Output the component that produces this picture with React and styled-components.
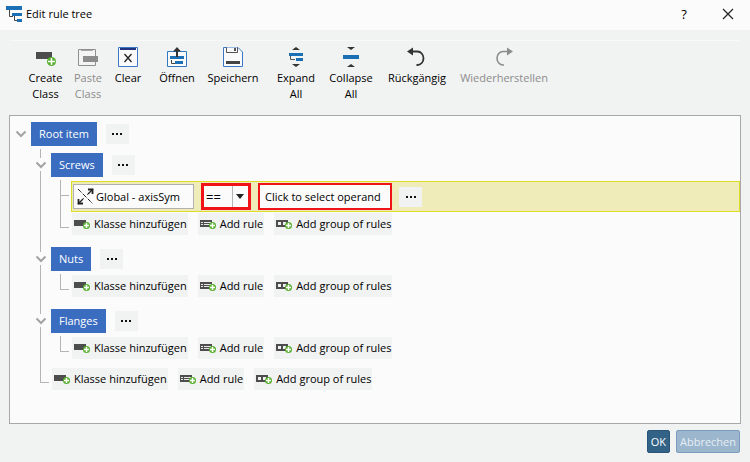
import React from 'react';
import styled, { createGlobalStyle, css } from 'styled-components';

const App = () => {
    return (
        <Dialog>
            <GlobalStyle />
            <TitleBar>
                <TreeIcon />
                <Title>Edit rule tree</Title>
                <TitleButton type="button" aria-label="Help">?</TitleButton>
                <TitleButton type="button" aria-label="Close">
                    <svg width="12" height="12" viewBox="0 0 12 12" fill="none" stroke="#222" strokeWidth="1.2">
                        <path d="M1 1l10 10M11 1L1 11" />
                    </svg>
                </TitleButton>
            </TitleBar>

            <Toolbar>
                <ToolGroup>
                    <Tool $width={43} icon={<CreateIcon />}>Create<br />Class</Tool>
                    <Tool $width={42} icon={<PasteIcon />} disabled>Paste<br />Class</Tool>
                    <Tool $width={38} icon={<ClearIcon />}>Clear</Tool>
                </ToolGroup>
                <ToolGroup>
                    <Tool $width={48} icon={<OpenIcon />}>Öffnen</Tool>
                    <Tool $width={64} icon={<SaveIcon />}>Speichern</Tool>
                </ToolGroup>
                <ToolGroup>
                    <Tool $width={50} icon={<ExpandIcon />}>Expand<br />All</Tool>
                    <Tool $width={60} icon={<CollapseIcon />}>Collapse<br />All</Tool>
                    <Tool $width={72} icon={<UndoIcon />}>Rückgängig</Tool>
                    <Tool $width={102} icon={<RedoIcon />} disabled>Wiederherstellen</Tool>
                </ToolGroup>
            </Toolbar>

            <TreePanel>
                <TreeList role="tree">
                    <Node label="Root item" root>
                        <Node label="Screws">
                            <Leaf>
                                <Rule />
                            </Leaf>
                            <Leaf last>
                                <Actions />
                            </Leaf>
                        </Node>
                        <Node label="Nuts">
                            <Leaf last>
                                <Actions />
                            </Leaf>
                        </Node>
                        <Node label="Flanges">
                            <Leaf last>
                                <Actions />
                            </Leaf>
                        </Node>
                        <Leaf last>
                            <Actions />
                        </Leaf>
                    </Node>
                </TreeList>
            </TreePanel>

            <Footer>
                <FooterButton type="button">OK</FooterButton>
                <FooterButton type="button" disabled>Abbrechen</FooterButton>
            </Footer>
        </Dialog>
    );
}

const Tool = ({ icon, children, ...rest }) => (
    <ToolButton type="button" {...rest}>
        {icon}
        <span>{children}</span>
    </ToolButton>
);

const Node = ({ label, root, children }) => (
    <TreeItem>
        <Gutter>
            <GutterTop $line={!root} />
            <Toggle type="button" aria-label={`Toggle ${label}`}>
                <svg width="12" height="8" viewBox="0 0 12 8" fill="none" stroke="#a3a3a3" strokeWidth="2">
                    <path d="M1.5 1.5L6 6l4.5-4.5" />
                </svg>
            </Toggle>
            {!root && <GutterLine />}
        </Gutter>
        <NodeBody>
            <NodeHeader>
                <NodeTag type="button">{label}</NodeTag>
                <MoreButton />
            </NodeHeader>
            <TreeList role="group">{children}</TreeList>
        </NodeBody>
    </TreeItem>
);

const Leaf = ({ last, children }) => (
    <TreeItem>
        <Gutter>
            <Elbow />
            {!last && <GutterLine />}
        </Gutter>
        {children}
    </TreeItem>
);

const Rule = () => (
    <RuleRow>
        <Attribute type="button">
            <AxisIcon />
            Global - axisSym
        </Attribute>
        <Operator>
            <select aria-label="Operator" defaultValue="==">
                <option>==</option>
                <option>!=</option>
            </select>
            <svg width="16" height="21" viewBox="0 0 16 21">
                <path d="M.5 0v21" stroke="#b5b5b5" />
                <path d="M4 8h8l-4 5z" fill="#222" />
            </svg>
        </Operator>
        <Operand type="button">Click to select operand</Operand>
        <MoreButton />
    </RuleRow>
);

const Actions = () => (
    <ActionRow>
        <ActionButton type="button"><AddClassIcon />Klasse hinzufügen</ActionButton>
        <ActionButton type="button"><AddRuleIcon />Add rule</ActionButton>
        <ActionButton type="button"><AddGroupIcon />Add group of rules</ActionButton>
    </ActionRow>
);

const MoreButton = () => (
    <More type="button" aria-label="More">
        <svg width="12" height="2" viewBox="0 0 12 2" fill="#111">
            <path d="M1 0h2v2H1zM5 0h2v2H5zM9 0h2v2H9z" />
        </svg>
    </More>
);

/* Icons */

const TreeIcon = () => (
    <svg width="17" height="17" viewBox="0 0 17 17">
        <path d="M3.5 4v6.5H7M8.500 10v4.500H12" fill="none" stroke="#444" />
        <path d="M0 0h16v4H0zM6 7h10v3H6zM11 13h5v3h-5z" fill="#1a6fb5" />
    </svg>
);

const Plus = ({ x, y, r }) => (
    <g>
        <circle cx={x} cy={y} r={r} fill="#58b030" />
        <path
            d={`M${x - r + 1} ${y}h${2 * r - 2}M${x} ${y - r + 1}v${2 * r - 2}`}
            stroke="#fff"
            strokeWidth="1.5"
        />
    </g>
);

const CreateIcon = () => (
    <svg width="20" height="20" viewBox="0 0 20 20">
        <path d="M0 5h16v7H0z" fill="#4d4d4d" />
        <Plus x={15.5} y={14.5} r={4.5} />
    </svg>
);

const PasteIcon = () => (
    <svg width="20" height="20" viewBox="0 0 20 20">
        <path d="M.5 2.5h17v16H.5z" fill="#f4f4f4" stroke="#8f8f8f" />
        <path d="M3 3.5h12" stroke="#a8a8a8" />
        <path d="M5 9h15v6H5z" fill="#8c8c8c" />
    </svg>
);

const ClearIcon = () => (
    <svg width="20" height="20" viewBox="0 0 20 20">
        <path d="M.5.5h19v19H.5z" fill="#fafafa" stroke="#3c78c8" />
        <path d="M2 1h16v2H2z" fill="#22357e" />
        <path d="M6.5 7l7 8M13.5 7l-7 8" stroke="#222" strokeWidth="1.3" />
    </svg>
);

const OpenIcon = () => (
    <svg width="20" height="20" viewBox="0 0 20 20">
        <path d="M.5 4.5h19v15H.5z" fill="#fafafa" stroke="#2f7ac0" />
        <path d="M4.5 13v3.5H8" fill="none" stroke="#444" />
        <path d="M3 9h14v3H3zM8 14h8v3H8z" fill="#1a6fb5" />
        <path d="M10 10V3" stroke="#333" strokeWidth="2" />
        <path d="M6 4.5L10 0l4 4.5z" fill="#333" />
    </svg>
);

const SaveIcon = () => (
    <svg width="20" height="20" viewBox="0 0 20 20">
        <path d="M.5.5H15L19.5 5v14.5H.5z" fill="#fafafa" stroke="#3c78c8" />
        <path d="M3.5.5v5h11v-5" fill="#fafafa" stroke="#555" />
        <path d="M11 1h2v3h-2z" fill="#555" />
        <path d="M3 14h14v3H3z" fill="#444" />
    </svg>
);

const ExpandIcon = () => (
    <svg width="20" height="20" viewBox="0 0 20 20">
        <path d="M6 3l4-3 4 3zM6 17h8l-4 3z" fill="#333" />
        <path d="M4.5 8v4.500H9" fill="none" stroke="#555" />
        <path d="M3 6h14v3H3zM10 11h7v3h-7z" fill="#1a6fb5" />
    </svg>
);

const CollapseIcon = () => (
    <svg width="20" height="20" viewBox="0 0 20 20">
        <path d="M6 0h8l-4 3zM6 20l4-3 4 3z" fill="#333" />
        <path d="M2 8h16v4H2z" fill="#1a6fb5" />
    </svg>
);

const UndoIcon = () => (
    <svg width="20" height="20" viewBox="0 0 20 20">
        <path d="M5 4.5h5.500a6 6.750 0 0 1 0 13.500H9.500" fill="none" stroke="#333" strokeWidth="1.8" />
        <path d="M0 4.500L6 .5v8z" fill="#333" />
    </svg>
);

const RedoIcon = () => (
    <svg width="20" height="20" viewBox="0 0 20 20">
        <path d="M14 4.500H9a6 6.750 0 0 0 0 13.500h1" fill="none" stroke="#8c8c8c" strokeWidth="1.6" />
        <path d="M19 4.500L13 .5v8z" fill="#8c8c8c" />
    </svg>
);

const AxisIcon = () => (
    <svg width="17" height="17" viewBox="0 0 17 17" fill="none" stroke="#222">
        <path d="M1 16l5-5M11 6l5-5" strokeWidth="1.400" />
        <path d="M6 11l5-5" strokeDasharray="1 2" />
        <path d="M1 1l15 15" strokeDasharray="4 1 1 1" />
        <path d="M11 1.500h4.500V6M1.500 11v4.500H6" strokeWidth="1.800" />
    </svg>
);

const AddClassIcon = () => (
    <svg width="17" height="12" viewBox="0 0 17 12">
        <path d="M0 2h12v6H0z" fill="#4d4d4d" />
        <Plus x={12.5} y={7.5} r={3.5} />
    </svg>
);

const AddRuleIcon = () => (
    <svg width="17" height="12" viewBox="0 0 17 12">
        <path d="M0 2h12v7H0z" fill="#4d4d4d" />
        <path d="M1 4.500h2M4 4.500h7M1 6.500h2M4 6.500h7" stroke="#e8e8e8" />
        <Plus x={12.5} y={7.5} r={3.5} />
    </svg>
);

const AddGroupIcon = () => (
    <svg width="17" height="12" viewBox="0 0 17 12">
        <path d="M0 2h12v7H0z" fill="#4d4d4d" />
        <path d="M2 4h3v3H2zM7 4h3v3H7z" fill="#f0f0f0" />
        <Plus x={12.5} y={7.5} r={3.5} />
    </svg>
);

/* Styles */

const GlobalStyle = createGlobalStyle`
    * {
        box-sizing: border-box;
    }

    body {
        margin: 0;
        background: #f1f2f2;
    }

    body, button, select {
        font-family: "Open Sans", "Noto Sans", sans-serif;
        font-size: 11px;
        line-height: 16px;
        color: #000;
    }

    button {
        padding: 0;
        border: none;
        background: none;
        white-space: nowrap;
    }

    svg {
        flex: none;
    }
`;

const Dialog = styled.div`
    display: flex;
    flex-direction: column;
    min-height: 100vh;
`;

const TitleBar = styled.header`
    display: flex;
    align-items: center;
    height: 30px;
    padding: 0 0 2px 6px;
    background: #fbfbfb;
`;

const Title = styled.h1`
    flex: 1;
    margin: 0 0 0 3px;
    font-size: 11px;
    font-weight: 400;
`;

const TitleButton = styled.button`
    display: flex;
    align-items: center;
    justify-content: center;
    width: 44px;
    height: 28px;
    font-size: 13px;
`;

const Toolbar = styled.div`
    display: flex;
    gap: 6px;
    margin: 10px 10px 0;
    padding: 6px 14px 0;
    border-top: 1px solid #f8f8f8;
`;

const ToolGroup = styled.div`
    display: flex;
    align-items: flex-start;
`;

const ToolButton = styled.button`
    display: flex;
    flex-direction: column;
    align-items: center;
    gap: 3px;
    width: ${props => props.$width}px;

    &:disabled {
        color: #8c8c8c;
    }
`;

const TreePanel = styled.main`
    flex: 1;
    margin: 13px 9px 0;
    padding: 2px 0 0 1px;
    border: 1px solid #a8a8a8;
    background: #fbfbfb;
`;

const TreeList = styled.ul`
    margin: 0;
    padding: 0;
    list-style: none;
`;

const TreeItem = styled.li.attrs({ role: 'treeitem' })`
    display: flex;
`;

const Gutter = styled.div`
    flex: none;
    display: flex;
    flex-direction: column;
    width: 20px;
`;

const line = css`
    margin-left: 9px;
    border-left: 1px solid #b4b4b4;
`;

const GutterTop = styled.div`
    height: 9px;
    ${props => props.$line && line}
`;

const GutterLine = styled.div`
    flex: 1;
    ${line}
`;

const Toggle = styled.button`
    display: flex;
    align-items: center;
    justify-content: center;
    height: 13px;
`;

const Elbow = styled.div`
    height: 16px;
    border-bottom: 1px solid #b4b4b4;
    ${line}
    margin-right: 2px;
`;

const NodeBody = styled.div`
    flex: 1;
    min-width: 0;
`;

const NodeHeader = styled.div`
    display: flex;
    align-items: center;
    gap: 9px;
    height: 31px;
    padding-top: 1px;
`;

const NodeTag = styled.button`
    height: 24px;
    padding: 0 8px;
    background: #3a6cc0;
    color: #fff;
`;

const More = styled.button`
    display: flex;
    align-items: center;
    justify-content: center;
    width: 23px;
    height: 20px;
    background: #f1f2f2;
`;

const RuleRow = styled.div`
    flex: 1;
    display: flex;
    align-items: center;
    gap: 7px;
    height: 31px;
    margin-top: 1px;
    padding-left: 1px;
    border: 1px solid #dfdc28;
    background: #efecba;
`;

const Attribute = styled.button`
    display: flex;
    align-items: center;
    gap: 2px;
    width: 121px;
    height: 25px;
    padding-left: 3px;
    border: 1px solid #b0b0b0;
    background: #fbfbfb;
`;

const Operator = styled.label`
    display: grid;
    align-items: center;
    width: 50px;
    height: 27px;
    border: 3px solid #f01418;
    background: #fbfbfb;

    select, svg {
        grid-area: 1 / 1;
    }

    select {
        height: 20px;
        padding: 0 0 0 2px;
        border: none;
        background: none;
        font-size: 13px;
        appearance: none;
    }

    svg {
        justify-self: end;
        pointer-events: none;
    }
`;

const Operand = styled.button`
    width: 134px;
    height: 27px;
    padding-left: 5px;
    border: 2px solid #f01418;
    background: #fbfbfb;
    text-align: left;
`;

const ActionRow = styled.div`
    display: flex;
    align-items: flex-start;
    gap: 10px;
    height: 31px;
    padding: 1px 0 0 1px;
`;

const ActionButton = styled.button`
    display: flex;
    align-items: center;
    gap: 3px;
    height: 22px;
    padding: 0 1px 0 2px;
    background: #f1f2f2;
`;

const Footer = styled.footer`
    display: flex;
    justify-content: flex-end;
    gap: 6px;
    padding: 6px 10px 9px;
`;

const FooterButton = styled.button`
    height: 23px;
    padding: 0 3px;
    border: 1px solid #2b5578;
    border-radius: 2px;
    background: #326286;
    color: #fff;

    &:disabled {
        border-color: #7c9cbd;
        background: #9bb6cd;
        color: #e6eef5;
    }
`;

export default App;
